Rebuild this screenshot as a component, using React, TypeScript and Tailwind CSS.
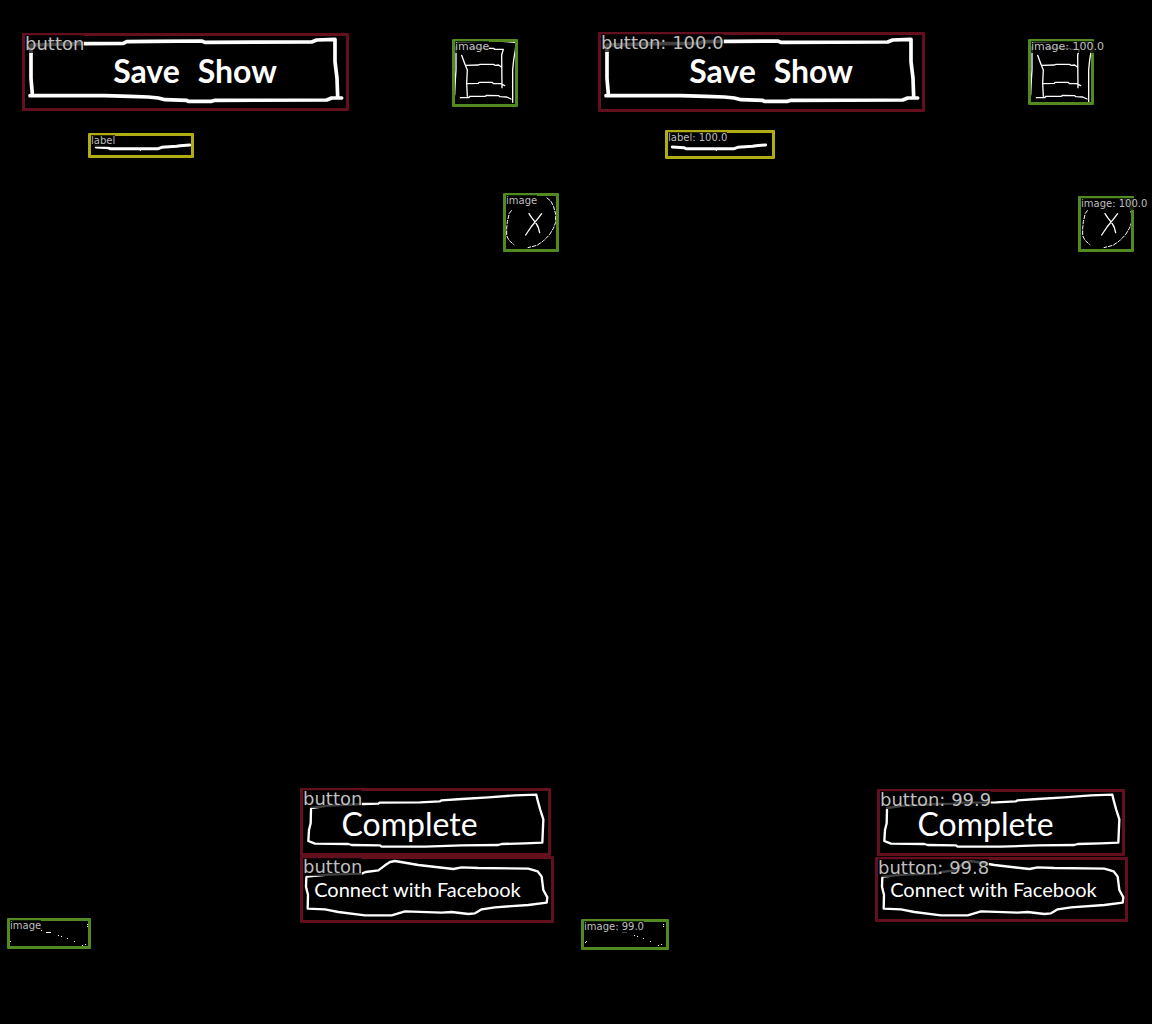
import React from "react";

type Kind = "button" | "image" | "label";

type Annotation = {
  kind: Kind;
  text: string;
  box: string;
  size: string;
};

const frameColor: Record<Kind, string> = {
  button: "border-[#640f1f]",
  image: "border-[#518a20]",
  label: "border-[#b0ac12]",
};

const LARGE = "text-[18px] leading-[18px]";
const MEDIUM = "text-[11px] leading-[12px]";
const SMALL = "text-[10px] leading-[12px]";

const groundTruth: Annotation[] = [
  { kind: "button", text: "button", size: LARGE, box: "left-[21px] top-[32px] w-[329px] h-[80px]" },
  { kind: "image", text: "image", size: MEDIUM, box: "left-[451px] top-[38px] w-[68px] h-[70px]" },
  { kind: "label", text: "label", size: SMALL, box: "left-[87px] top-[132px] w-[108px] h-[27px]" },
  { kind: "image", text: "image", size: SMALL, box: "left-[502px] top-[192px] w-[58px] h-[61px]" },
  { kind: "button", text: "button", size: LARGE, box: "left-[299px] top-[787px] w-[253px] h-[70px]" },
  { kind: "button", text: "button", size: LARGE, box: "left-[299px] top-[855px] w-[256px] h-[69px]" },
  { kind: "image", text: "image", size: SMALL, box: "left-[6px] top-[917px] w-[86px] h-[33px]" },
];

const predictions: Annotation[] = [
  { kind: "button", text: "button: 100.0", size: LARGE, box: "left-[21px] top-[31px] w-[329px] h-[82px]" },
  { kind: "image", text: "image: 100.0", size: MEDIUM, box: "left-[451px] top-[38px] w-[68px] h-[68px]" },
  { kind: "label", text: "label: 100.0", size: SMALL, box: "left-[88px] top-[129px] w-[112px] h-[31px]" },
  { kind: "image", text: "image: 100.0", size: SMALL, box: "left-[501px] top-[195px] w-[58px] h-[58px]" },
  { kind: "button", text: "button: 99.9", size: LARGE, box: "left-[300px] top-[788px] w-[250px] h-[69px]" },
  { kind: "button", text: "button: 99.8", size: LARGE, box: "left-[298px] top-[856px] w-[255px] h-[67px]" },
  { kind: "image", text: "image: 99.0", size: SMALL, box: "left-[4px] top-[918px] w-[90px] h-[33px]" },
];

function Frame({ kind, text, box, size }: Annotation) {
  return (
    <div className={`pointer-events-none absolute flex p-px ${box}`}>
      <div className={`flex min-w-0 flex-1 items-start rounded-[1px] border-3 ${frameColor[kind]}`}>
        <span
          className={`-mt-px shrink-0 whitespace-nowrap bg-black/75 font-['DejaVu_Sans',sans-serif] text-[#bfbfbf] ${size}`}
        >
          {text}
        </span>
      </div>
    </div>
  );
}

function Drawing({ box, viewBox, children }: { box: string; viewBox: string; children: React.ReactNode }) {
  return (
    <svg
      className={`absolute ${box}`}
      viewBox={viewBox}
      fill="none"
      stroke="white"
      strokeLinecap="round"
      strokeLinejoin="round"
      aria-hidden="true"
    >
      {children}
    </svg>
  );
}

const dots: [number, number][] = [
  [27, 96], [30, 93], [123, 60], [138, 66], [141, 66], [144, 66], [147, 66], [150, 66], [174, 75], [183, 78],
  [201, 84], [222, 93], [246, 105], [255, 102], [261, 42], [261, 48],
];

function Sketch() {
  return (
    <>
      <button
        type="button"
        className="absolute left-[15px] top-[25px] h-[92px] w-[340px] pl-5 text-center font-['Lato',sans-serif] text-[32px] font-bold leading-8 text-white"
      >
        <Drawing box="inset-0 h-full w-full" viewBox="0 0 1020 276">
          <path
            strokeWidth="11"
            d="M48 60 L200 56 L325 55 L335 50 L415 49 L560 48 L570 52 L890 51 L905 45 L960 43 L960 110 L966 160 L968 216 M48 60 L48 160 L52 207 M45 212 L270 212 L345 214 L400 216 L430 219 L450 224 L515 226 L520 229 L590 229 L600 226 L935 225 L950 219 L980 219"
          />
        </Drawing>
        <span className="mr-2.5">Save</span> <span>Show</span>
      </button>

      <Drawing box="left-[440px] top-[30px] h-[85px] w-[90px]" viewBox="0 0 270 255">
        <path
          strokeWidth="4"
          d="M48 50 L48 120 L46 150 L44 195 M48 38 L90 36 L150 32 L228 37 L226 60 L221 90 L218 120 L218 217"
        />
        <path
          strokeWidth="4"
          d="M65 76 L72 95 L77 108 L82 120 L80 160 L82 199 M90 54 L160 55 L165 58 L190 58 L185 75 L186 173 M78 106 L115 105 L120 103 L160 103 L166 106 L176 105 L185 112 M80 161 L115 160 L118 157 L157 157 L160 161 L182 161 L194 167 M61 203 L87 203 L88 199 L135 199 L140 196 L176 197 L180 200 L200 201 L213 207"
        />
      </Drawing>

      <Drawing box="left-[80px] top-[125px] h-[40px] w-[125px]" viewBox="0 0 375 120">
        <path
          strokeWidth="9"
          d="M49 66 L85 68 L90 71 L235 71 L245 67 L290 64 L300 62 L329 60"
        />
        <path strokeWidth="3" d="M181 70 V77" />
      </Drawing>

      <Drawing box="left-[495px] top-[185px] h-[75px] w-[75px]" viewBox="0 0 225 225">
        <path
          strokeWidth="3"
          strokeLinecap="butt"
          strokeDasharray="13 3"
          d="M50 76 L43 85 L37 110 L35 130 L35 152 L42 166 L58 180 M155 38 L168 49 L176 65 L182 88 L182 112 L175 130 L163 150 L145 168 L126 181 L98 188"
        />
        <path strokeWidth="4" d="M102 86 L110 98 L124 116 L130 128 L134 143 M140 86 L126 104 L108 126 L92 150" />
      </Drawing>

      <button
        type="button"
        className="absolute left-[295px] top-[780px] h-[75px] w-[265px] pr-9 pt-3 text-center font-['Lato',sans-serif] text-[32px] leading-6 text-white"
      >
        <Drawing box="inset-0 h-full w-full" viewBox="0 0 795 225">
          <path
            strokeWidth="7"
            d="M48 84 L100 77 L205 72 L250 71 L254 68 L375 67 L435 64 L440 61 L500 57 L580 52 L660 46 L724 44 L729 65 L736 90 L745 118 L742 188 L690 190 L620 192 L610 195 L500 196 L390 200 L260 200 L255 196 L170 195 L160 192 L60 191 L40 183 L42 150 L47 130 L48 90"
          />
        </Drawing>
        Complete
      </button>

      <button
        type="button"
        className="absolute left-[295px] top-[855px] h-[75px] w-[265px] pb-2 pr-5 text-center font-['Lato',sans-serif] text-[20px] leading-6 text-white"
      >
        <Drawing box="inset-0 h-full w-full" viewBox="0 225 795 225">
          <path
            strokeWidth="7"
            d="M35 290 L100 284 L200 281 L212 276 L250 271 L270 256 L285 246 L300 243 L370 255 L475 267 L500 262 L550 264 L700 266 L728 274 L740 290 L745 330 L757 352 L755 368 L700 375 L600 382 L560 388 L540 400 L520 402 L470 396 L440 398 L330 394 L290 406 L210 406 L130 396 L90 388 L38 386 L39 345 L33 320 L34 293"
          />
        </Drawing>
        Connect with Facebook
      </button>

      <Drawing box="left-0 top-[910px] h-[45px] w-[100px]" viewBox="0 0 300 135">
        <g fill="white" stroke="none">
          {dots.map(([x, y]) => (
            <rect key={`${x}-${y}`} x={x} y={y} width="3" height="3" />
          ))}
        </g>
      </Drawing>
    </>
  );
}

function Canvas({ name, annotations }: { name: string; annotations: Annotation[] }) {
  return (
    <section aria-label={name} className="relative min-h-screen">
      <Sketch />
      {annotations.map((item) => (
        <Frame key={item.box} {...item} />
      ))}
    </section>
  );
}

export default function App() {
  return (
    <main className="grid min-h-screen grid-cols-2 bg-black">
      <Canvas name="Ground truth" annotations={groundTruth} />
      <Canvas name="Predictions" annotations={predictions} />
    </main>
  );
}
